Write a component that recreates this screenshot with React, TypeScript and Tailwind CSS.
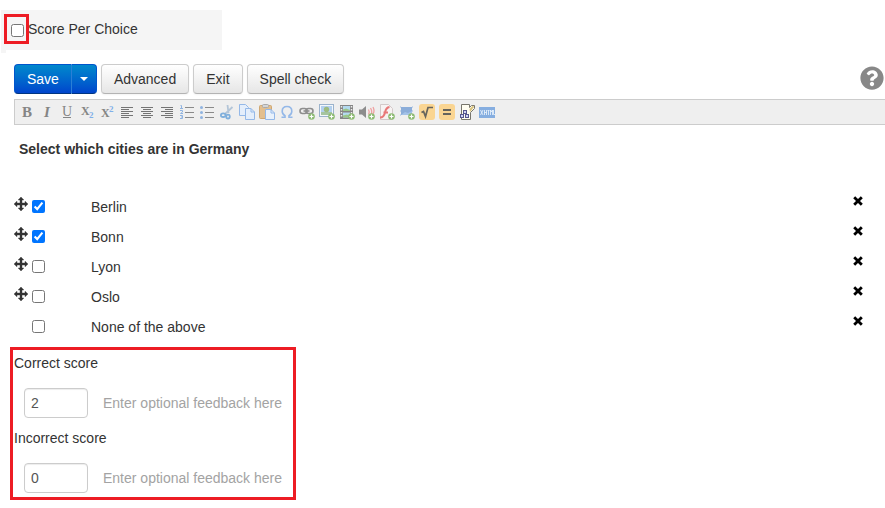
import React, { useState } from "react";
import { FaQuestionCircle } from "react-icons/fa";

const GREY = "#858585";
const LINE = "#747474";
const BLUE = "#8fb3e0";

function Plus() {
  return (
    <g>
      <circle cx="12.500" cy="12.500" r="3.300" fill="#8dbb73" />
      <path d="M12.500 10.500v4M10.500 12.500h4" stroke="#fff" strokeWidth="1.2" />
    </g>
  );
}

const serif = "Liberation Serif, serif";

const tools: { name: string; art: React.ReactNode }[] = [
  {
    name: "Bold",
    art: <text x="8" y="13" textAnchor="middle" fontFamily={serif} fontWeight="bold" fontSize="15" fill={GREY}>B</text>,
  },
  {
    name: "Italic",
    art: <text x="8" y="13" textAnchor="middle" fontFamily={serif} fontStyle="italic" fontWeight="bold" fontSize="15" fill={GREY}>I</text>,
  },
  {
    name: "Underline",
    art: (
      <g>
        <text x="8" y="12" textAnchor="middle" fontFamily={serif} fontSize="14" fill={GREY}>U</text>
        <path d="M4 13.5h8" stroke={GREY} />
      </g>
    ),
  },
  {
    name: "Subscript",
    art: (
      <g fontFamily={serif} fontWeight="bold">
        <text x="2" y="11" fontSize="12" fill={GREY}>X</text>
        <text x="10" y="14" fontSize="9" fill="#7fb0ea">2</text>
      </g>
    ),
  },
  {
    name: "Superscript",
    art: (
      <g fontFamily={serif} fontWeight="bold">
        <text x="2" y="13" fontSize="12" fill={GREY}>X</text>
        <text x="10" y="8" fontSize="9" fill="#7fb0ea">2</text>
      </g>
    ),
  },
  {
    name: "Align left",
    art: <path d="M2 3.5h12M2 5.5h8M2 7.5h12M2 9.5h8M2 11.5h12M2 13.5h8" stroke={LINE} />,
  },
  {
    name: "Align centre",
    art: <path d="M2 3.5h12M4 5.5h8M2 7.5h12M4 9.5h8M2 11.5h12M4 13.5h8" stroke={LINE} />,
  },
  {
    name: "Align right",
    art: <path d="M2 3.5h12M6 5.5h8M2 7.5h12M6 9.5h8M2 11.5h12M6 13.5h8" stroke={LINE} />,
  },
  {
    name: "Numbered list",
    art: (
      <g>
        <path d="M6 3.5h9M6 8.5h9M6 13.5h9" stroke="#8a8a8a" />
        <path d="M1.5 1.5h1v3M1 4.5h3M1 6.5h2.5v1.5L1.5 9.5H4M1 11.5h2.5v3H1M2 13h1.5" stroke={BLUE} fill="none" />
      </g>
    ),
  },
  {
    name: "Bulleted list",
    art: (
      <g>
        <path d="M6 3.5h9M6 8.5h9M6 13.5h9" stroke="#8a8a8a" />
        <circle cx="2.5" cy="3.5" r="1.5" fill={BLUE} />
        <circle cx="2.5" cy="8.5" r="1.5" fill={BLUE} />
        <circle cx="2.5" cy="13.5" r="1.5" fill={BLUE} />
      </g>
    ),
  },
  {
    name: "Cut",
    art: (
      <g fill="none">
        <path d="M8.500 1l1 8M13.500 3L6 10" stroke="#b3c5d8" strokeWidth="1.8" />
        <ellipse cx="4.2" cy="11.2" rx="2.3" ry="1.8" stroke="#7fafdc" strokeWidth="1.8" />
        <ellipse cx="9" cy="12.6" rx="1.8" ry="2" stroke="#7fafdc" strokeWidth="1.8" />
      </g>
    ),
  },
  {
    name: "Copy",
    art: (
      <g stroke="#94b8e8" fill="#e4eefb">
        <path d="M.5.5h6l3 3v8h-9z" />
        <path d="M6.500 4.500h5.500l3.500 3.500v7.500h-9z" />
        <path d="M12 4.500v3.500h3.500" fill="none" />
      </g>
    ),
  },
  {
    name: "Paste",
    art: (
      <g>
        <rect x=".5" y="1.500" width="12" height="13" rx="1" fill="#e3bf8e" stroke="#cfa772" />
        <rect x="3.500" y=".5" width="6" height="3" rx="1" fill="#d5d5d5" stroke="#aaa" />
        <path d="M6.500 5.500h5.500l3.500 3.500v6.500h-9z" fill="#e8f1fc" stroke="#94b8e8" />
        <path d="M12 5.500v3.500h3.500" fill="none" stroke="#94b8e8" />
      </g>
    ),
  },
  {
    name: "Special character",
    art: (
      <path
        d="M2.500 13.300h3.500v-1.500C4 10.600 3.200 9 3.200 7.200 3.200 4.300 5.200 2.500 8 2.500s4.800 1.800 4.800 4.700c0 1.800-.8 3.400-2.800 4.600v1.500h3.500"
        fill="none"
        stroke="#94b8e8"
        strokeWidth="1.600"
      />
    ),
  },
  {
    name: "Link",
    art: (
      <g>
        <g fill="none" stroke="#8e8e8e" strokeWidth="1.600">
          <rect x="1" y="4.500" width="7" height="5" rx="2.500" />
          <rect x="7" y="4.500" width="7" height="5" rx="2.500" />
          <path d="M4.500 7h6" />
        </g>
        <Plus />
      </g>
    ),
  },
  {
    name: "Image",
    art: (
      <g>
        <rect x=".5" y=".5" width="14" height="12" fill="#f3f7fb" stroke="#9bb3cc" />
        <rect x="2" y="2" width="11" height="6" fill="#b3d0ee" />
        <path d="M2 8h11v3H2z" fill="#a5c4a0" />
        <circle cx="7.500" cy="5.500" r="2.700" fill="#9dbb80" />
        <Plus />
      </g>
    ),
  },
  {
    name: "Video",
    art: (
      <g>
        <rect x="1" y="1" width="13" height="14" fill="#858585" />
        <path d="M2.500 2v12M12.500 2v12" stroke="#eee" strokeWidth="1.500" strokeDasharray="1.500 1.500" />
        <path d="M4 2h7v5H4zM4 8.500h7v5H4z" fill="#b3daf0" />
        <path d="M4 7V5.500l3-1 4 1.500v1zM4 13.500v-2l4-1 3 2v1z" fill="#9bc78a" />
        <Plus />
      </g>
    ),
  },
  {
    name: "Audio",
    art: (
      <g>
        <path d="M0 5.500h3L7 2v12l-4-3.500H0z" fill="#8c8c8c" />
        <path d="M9.500 5.500q1.500 2.500 0 5M11.500 4q2.500 4 0 8M14 3q2 4 0 7" stroke="#efa0a0" strokeWidth="1.300" fill="none" />
        <Plus />
      </g>
    ),
  },
  {
    name: "Flash",
    art: (
      <g>
        <path d="M1.500.5h8l4 4v11h-12z" fill="#f7f3f3" stroke="#d3c9c9" />
        <path d="M10.500 3Q7 3.500 6 8.500T1 13.500M4.500 8.500h4.500" fill="none" stroke="#e87878" strokeWidth="2" />
        <Plus />
      </g>
    ),
  },
  {
    name: "Embed object",
    art: (
      <g>
        <rect x="2" y="3" width="11" height="8" fill="#8badd9" />
        <path d="M2 11l4-3 3 1 4-2v4z" fill="#a3c2e8" />
        <path d="M1.500 2v10M13.500 2v10" stroke="#c7d5e8" strokeDasharray="2 2" />
        <Plus />
      </g>
    ),
  },
  {
    name: "Formula",
    art: (
      <g>
        <rect width="16" height="16" rx="3" fill="#fad592" />
        <path d="M2.500 8.500l2-1 2 5L9 3.500h5" fill="none" stroke="#66645d" strokeWidth="1.700" />
      </g>
    ),
  },
  {
    name: "Equation",
    art: (
      <g>
        <rect width="16" height="16" rx="3" fill="#fad592" />
        <path d="M4 6h8M4 10h8" stroke="#66645d" strokeWidth="2" />
      </g>
    ),
  },
  {
    name: "Widget",
    art: (
      <g>
        <path d="M2.500.5h8v3l2-2h3v3l-4 4v7h-9z" fill="#fffdf1" stroke="#77756c" />
        <path d="M10.500 5l3.500-3.500 1 1.500-4 5z" fill="#d9c27b" />
        <g fill="#cfd1f7" stroke="#55568d">
          <rect x="4.500" y="6.500" width="3" height="3" />
          <rect x="1.500" y="10.500" width="3" height="3" />
          <rect x="6.500" y="10.500" width="3" height="3" />
        </g>
      </g>
    ),
  },
  {
    name: "XHTML source",
    art: (
      <g>
        <rect x="0" y="3" width="16" height="11" fill="#86aee0" />
        <path
          d="M1.500 6l2.500 5M4 6l-2.500 5M5.500 6v5M7.500 6v5M5.500 8.500h2M8.500 6.500h2M9.500 6.500V11M11.500 11V6l1 2 1-2v5M14.500 6v4.500h1.500"
          stroke="#eef5fd"
          strokeWidth=".8"
          fill="none"
        />
      </g>
    ),
  },
];

const initialChoices = [
  { text: "Berlin", checked: true, movable: true },
  { text: "Bonn", checked: true, movable: true },
  { text: "Lyon", checked: false, movable: true },
  { text: "Oslo", checked: false, movable: true },
  { text: "None of the above", checked: false, movable: false },
];

function MoveIcon() {
  return (
    <svg width="14" height="14" viewBox="0 0 14 14" fill="#333" aria-hidden="true">
      <path d="M7 0l2.800 3H8v3h3V4.200L14 7l-3 2.800V8H8v3h1.800L7 14l-2.800-3H6V8H3v1.800L0 7l3-2.800V6h3V3H4.200z" stroke="#333" strokeWidth=".4" />
    </svg>
  );
}

function RemoveIcon() {
  return (
    <svg width="10" height="10" viewBox="0 0 10 10" aria-hidden="true">
      <path d="M1.200 1.200l7.600 7.600M8.800 1.200l-7.600 7.600" stroke="#000" strokeWidth="2.800" />
    </svg>
  );
}

const plainButton =
  "h-[30px] rounded border border-[#ccc] border-b-[#b3b3b3] bg-linear-to-b from-white to-[#e6e6e6] px-3 text-[#333] shadow-[inset_0_1px_0_rgba(255,255,255,0.2),0_1px_2px_rgba(0,0,0,0.05)]";

function ScoreField({ id, label, value }: { id: string; label: string; value: string }) {
  return (
    <div>
      <label htmlFor={id} className="block pl-px">
        {label}
      </label>
      <div className="mt-[15px] flex pl-[11px]">
        <input
          id={id}
          type="text"
          defaultValue={value}
          className="h-[30px] w-16 rounded border border-[#ccc] bg-white px-1.5 text-[#555] shadow-[inset_0_1px_1px_rgba(0,0,0,0.075)]"
        />
        <input
          type="text"
          aria-label={`${label} feedback`}
          placeholder="Enter optional feedback here"
          className="ml-[15px] h-[30px] min-w-0 flex-1 bg-transparent placeholder:text-[#a3a3a3]"
        />
      </div>
    </div>
  );
}

export default function App() {
  const [choices, setChoices] = useState(initialChoices);

  const toggle = (index: number) =>
    setChoices(choices.map((c, i) => (i === index ? { ...c, checked: !c.checked } : c)));

  return (
    <main className="bg-white pt-2.5 pb-2 font-['Liberation_Sans',Arial,sans-serif] text-sm/5 text-[#333]">
      <div className="ml-px flex h-10 w-[221px] items-start bg-[#f5f5f5] pt-1 pl-[3px]">
        <span className="flex h-[30px] w-[25px] items-center border-3 border-[#ed1c24] pt-0.5 pl-1">
          <input id="per-choice" type="checkbox" className="size-[13px]" />
        </span>
        <label htmlFor="per-choice" className="-ml-px pt-[5px]">
          Score Per Choice
        </label>
      </div>
      <div className="ml-px h-[3px] w-[5px] bg-[#f5f5f5]" />

      <div className="mt-[11px] flex items-center pl-3.5">
        <div className="flex h-[30px] text-white [text-shadow:0_-1px_0_rgba(0,0,0,0.25)]">
          <button
            type="button"
            className="rounded-l border border-r-0 border-[#0055cc] border-b-[#003580] bg-linear-to-b from-[#0088cc] to-[#0044cc] px-3"
          >
            Save
          </button>
          <button
            type="button"
            aria-label="More save options"
            className="flex w-[26px] items-center justify-center rounded-r border border-[#0055cc] border-b-[#003580] border-l-[#2a7fd6] bg-linear-to-b from-[#0088cc] to-[#0044cc]"
          >
            <svg width="8" height="4" viewBox="0 0 8 4" fill="#fff" aria-hidden="true">
              <path d="M0 0h8L4 4z" />
            </svg>
          </button>
        </div>
        <div className="ml-1 flex gap-1">
          <button type="button" className={plainButton}>Advanced</button>
          <button type="button" className={plainButton}>Exit</button>
          <button type="button" className={plainButton}>Spell check</button>
        </div>
        <button type="button" aria-label="Help" className="mt-[-3px] ml-auto pr-px text-[#888]">
          <FaQuestionCircle size={24} />
        </button>
      </div>

      <div className="mt-[5px] ml-3.5 flex h-[26px] items-center border border-r-0 border-[#ccc] bg-[#efefef] pl-0.5">
        {tools.map((tool) => (
          <button
            key={tool.name}
            type="button"
            aria-label={tool.name}
            className="flex size-5 shrink-0 items-center justify-center"
          >
            <svg width="16" height="16" viewBox="0 0 16 16" className="overflow-visible" aria-hidden="true">
              {tool.art}
            </svg>
          </button>
        ))}
      </div>

      <h1 className="mt-3.5 pl-[19px] font-bold">Select which cities are in Germany</h1>

      <ul className="mt-[33px] pr-[22px] pl-3.5">
        {choices.map((choice, index) => (
          <li key={choice.text} className="flex h-[30px] items-start pt-[5px]">
            <span className="w-[18px]">{choice.movable && <MoveIcon />}</span>
            <input
              id={`choice-${index}`}
              type="checkbox"
              checked={choice.checked}
              onChange={() => toggle(index)}
              className="mt-[3px] size-[13px]"
            />
            <label htmlFor={`choice-${index}`} className="ml-[46px]">
              {choice.text}
            </label>
            <button
              type="button"
              aria-label={`Remove ${choice.text}`}
              className="-mt-px ml-auto"
              onClick={() => setChoices(choices.filter((_, i) => i !== index))}
            >
              <RemoveIcon />
            </button>
          </li>
        ))}
      </ul>

      <section className="mt-[5px] ml-2.5 flex w-[286px] flex-col gap-2.5 border-3 border-[#ed1c24] pt-[3px] pb-1">
        <ScoreField id="correct-score" label="Correct score" value="2" />
        <ScoreField id="incorrect-score" label="Incorrect score" value="0" />
      </section>
    </main>
  );
}
